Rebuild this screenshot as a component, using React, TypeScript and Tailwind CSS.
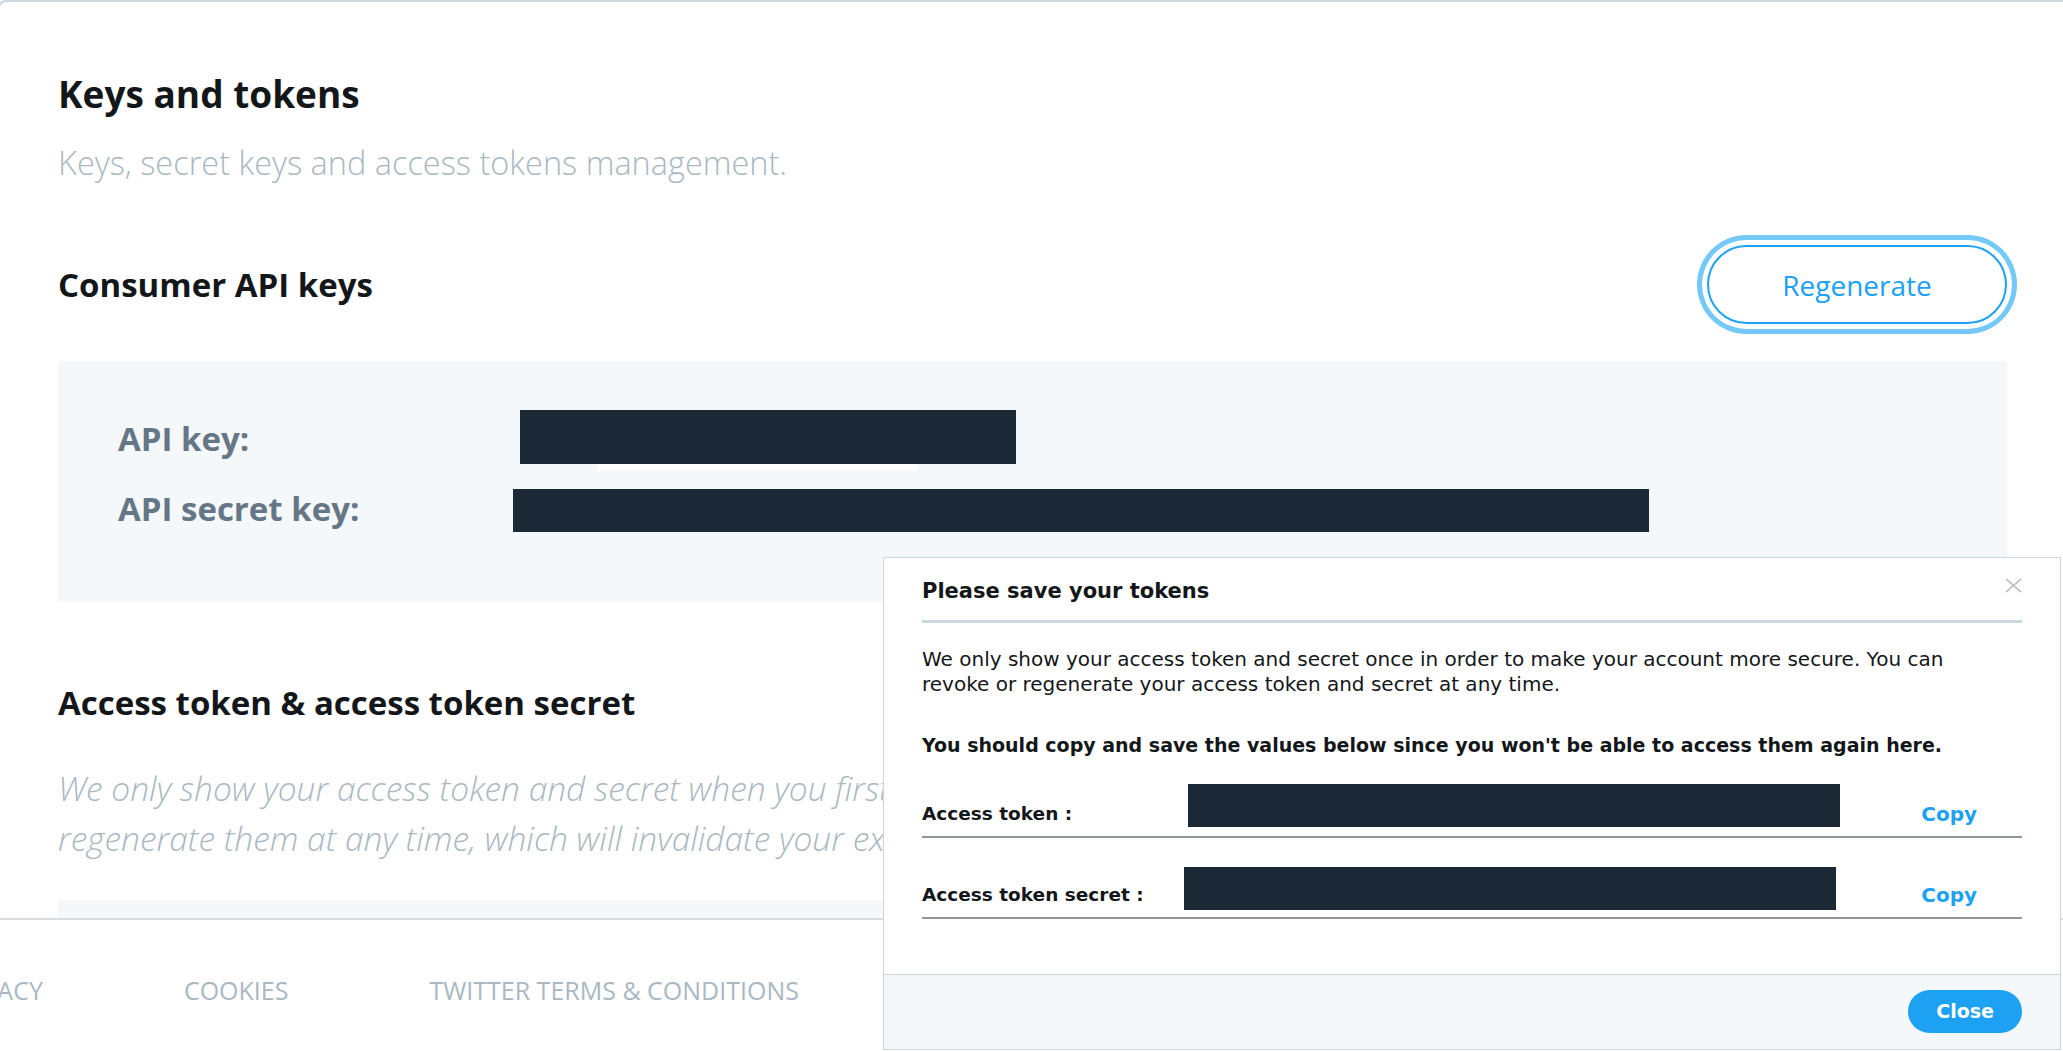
import React from "react";

const SANS = "font-['Open_Sans',sans-serif]";
const MODAL_FONT = "font-['DejaVu_Sans',sans-serif]";

function CloseGlyph() {
  return (
    <svg width="17" height="15" viewBox="0 0 17 15" fill="none" stroke="#AAB8C2" strokeWidth="1.4">
      <path d="M1 1L16 14M16 1L1 14" />
    </svg>
  );
}

function TokenRow({
  label,
  boxClass,
  textMb,
  pb,
}: {
  label: string;
  boxClass: string;
  textMb: string;
  pb: string;
}) {
  return (
    <div className={`flex items-end border-b-2 border-[#8E979E] ${pb}`}>
      <span className={`w-[262px] shrink-0 text-[18.5px] font-bold leading-[22px] ${textMb}`}>{label}</span>
      <div className={`h-[43px] w-[652px] bg-[#1B2836] ${boxClass}`} />
      <span className={`ml-auto mr-[45px] text-[20px] font-bold leading-[22px] text-[#1DA1F2] ${textMb}`}>Copy</span>
    </div>
  );
}

export default function App() {
  return (
    <div className="relative flex h-screen flex-col overflow-hidden bg-white">
      <main className="flex-1 overflow-hidden">
        <div className={`-ml-[2px] h-full rounded-tl-[8px] border-l-2 border-t-2 border-[#CCD6DD] pl-[58px] pr-[56px] ${SANS}`}>
          <h1 className="mt-[73px] text-[37px] font-bold leading-[38px] text-[#14171A]">Keys and tokens</h1>
          <p className="mt-[34px] text-[32.5px] font-light leading-[32px] text-[#AAB8C2]">
            Keys, secret keys and access tokens management.
          </p>

          <div className="mt-[66px] flex items-center justify-between">
            <h2 className="text-[33px] font-bold leading-[34px] text-[#14171A]">Consumer API keys</h2>
            <button className="h-[79px] w-[300px] rounded-full border-2 border-[#1DA1F2] bg-white text-[28px] text-[#1DA1F2] shadow-[0_0_0_5px_#fff,0_0_0_10px_#74C9F8]">
              Regenerate
            </button>
          </div>

          <div className="mt-[37px] bg-[#F5F8FA] pb-[70px] pl-[60px] pt-[49px]">
            <div className="grid grid-cols-[395px_1fr] items-start">
              <span className="mt-[9px] text-[33px] font-bold leading-[40px] text-[#657786]">API key:</span>
              <div className="flex flex-col">
                <div className="ml-[7px] h-[54px] w-[496px] bg-[#1B2836]" />
                <div className="ml-[84px] h-[6px] w-[321px] bg-white" />
              </div>
            </div>
            <div className="mt-[19px] grid grid-cols-[395px_1fr] items-start">
              <span className="text-[33px] font-bold leading-[40px] text-[#657786]">API secret key:</span>
              <div className="h-[43px] w-[1136px] bg-[#1B2836]" />
            </div>
          </div>

          <h2 className="mt-[84px] text-[33px] font-bold leading-[34px] text-[#14171A]">
            Access token &amp; access token secret
          </h2>
          <p className="mt-[43px] whitespace-nowrap text-[33.5px] font-light italic leading-[50px] text-[#AAB8C2]">
            We only show your access token and secret when you first create them. You can
            <br />
            regenerate them at any time, which will invalidate your existing access token and secret.
          </p>
          <div className="mt-[37px] h-[240px] bg-[#F5F8FA]" />
        </div>
      </main>

      <footer className={`h-[133px] shrink-0 overflow-hidden border-t-2 border-[#D8DCDF] bg-white ${SANS}`}>
        <nav className="-ml-[55px] flex gap-[141px] whitespace-nowrap pt-[58px] text-[25px] leading-[25px] text-[#AAB8C2]">
          <span>PRIVACY</span>
          <span>COOKIES</span>
          <span>TWITTER TERMS &amp; CONDITIONS</span>
        </nav>
      </footer>

      {/* dialog over the page */}
      <div
        className={`absolute left-[883px] top-[557px] z-10 w-[1178px] border border-[#CCD6DD] bg-white text-[#14171A] ${MODAL_FONT}`}
      >
        <div className="px-[38px] pt-[19px]">
          <div className="flex items-start justify-between border-b-[3px] border-[#CCD6DD] pb-[15px]">
            <h3 className="text-[21px] font-bold leading-[28px]">Please save your tokens</h3>
            <button className="mt-[1px]">
              <CloseGlyph />
            </button>
          </div>
        </div>

        <div className="px-[38px] pb-[55px] pt-[24px]">
          <p className="text-[20px] leading-[25px]">
            We only show your access token and secret once in order to make your account more secure. You can
            <br />
            revoke or regenerate your access token and secret at any time.
          </p>
          <p className="mt-[36px] text-[19px] font-bold leading-[25px]">
            You should copy and save the values below since you won't be able to access them again here.
          </p>
          <div className="mt-[26px]">
            <TokenRow label="Access token :" boxClass="ml-[4px]" textMb="mb-[2px]" pb="pb-[9px]" />
          </div>
          <div className="mt-[29px]">
            <TokenRow label="Access token secret :" boxClass="" textMb="mb-[4px]" pb="pb-[7px]" />
          </div>
        </div>

        <div className="flex justify-end border-t border-[#CCD6DD] bg-[#F5F8FA] px-[38px] pb-[16px] pt-[15px]">
          <button className="h-[43px] rounded-full bg-[#1DA1F2] px-[28px] text-[19px] font-bold text-white">Close</button>
        </div>
      </div>
    </div>
  );
}
